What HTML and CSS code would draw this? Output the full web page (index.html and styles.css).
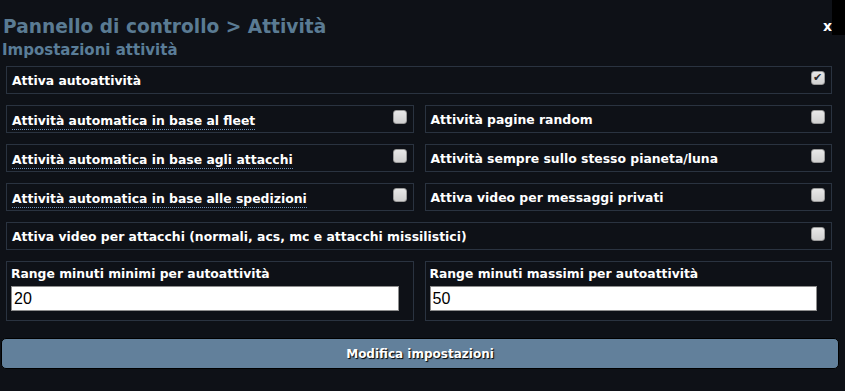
FILE: index.html
```html
<!DOCTYPE html>
<html lang="it">
<head>
    <meta charset="UTF-8">
    <title>Pannello di controllo - Attività</title>
    <link rel="stylesheet" href="styles.css">
</head>
<body>
    <div class="panel">
        <div class="panel-head">
            <h1>Pannello di controllo &gt; Attività</h1>
            <span class="close">x</span>
        </div>
        <h2>Impostazioni attività</h2>

        <form class="settings">
            <label class="opt full">
                <span>Attiva autoattività</span>
                <input type="checkbox" checked>
            </label>

            <label class="opt">
                <span class="hint">Attività automatica in base al fleet</span>
                <input type="checkbox">
            </label>
            <label class="opt">
                <span>Attività pagine random</span>
                <input type="checkbox">
            </label>

            <label class="opt">
                <span class="hint">Attività automatica in base agli attacchi</span>
                <input type="checkbox">
            </label>
            <label class="opt">
                <span>Attività sempre sullo stesso pianeta/luna</span>
                <input type="checkbox">
            </label>

            <label class="opt">
                <span class="hint">Attività automatica in base alle spedizioni</span>
                <input type="checkbox">
            </label>
            <label class="opt">
                <span>Attiva video per messaggi privati</span>
                <input type="checkbox">
            </label>

            <label class="opt full">
                <span>Attiva video per attacchi (normali, acs, mc e attacchi missilistici)</span>
                <input type="checkbox">
            </label>

            <div class="range">
                <span>Range minuti minimi per autoattività</span>
                <input type="text" value="20">
            </div>
            <div class="range">
                <span>Range minuti massimi per autoattività</span>
                <input type="text" value="50">
            </div>
        </form>

        <button type="button">Modifica impostazioni</button>
    </div>
    <div class="edge"></div>
</body>
</html>
```

FILE: styles.css
```css
body {
    margin: 0;
    background: #0e1117;
    font-family: Verdana, "DejaVu Sans", sans-serif;
    color: #fff;
}
.panel {
    width: 839px;
    padding-top: 14px;
}
.panel-head {
    display: flex;
    justify-content: space-between;
    align-items: baseline;
    padding: 0 7px 0 3px;
}
h1 {
    margin: 0;
    font-size: 18.6px;
    line-height: 26px;
    color: #5a7b93;
}
.close {
    font-size: 14px;
    font-weight: bold;
    position: relative;
    top: -2px;
}
h2 {
    margin: 0;
    padding-left: 2px;
    font-size: 15px;
    line-height: 20px;
    color: #5a7d98;
}
.settings {
    display: grid;
    grid-template-columns: 1fr 1fr;
    gap: 11px 11px;
    width: 826px;
    margin: 6px 0 0 6px;
}
.opt {
    display: flex;
    justify-content: space-between;
    align-items: center;
    height: 28px;
    box-sizing: border-box;
    padding: 0 6px 0 5px;
    border: 1px solid #2a3340;
    font-size: 12.4px;
    font-weight: bold;
}
.hint {
    border-bottom: 1px dotted #6f8fb3;
    line-height: 16px;
    margin-top: 4px;
}
.full {
    grid-column: 1 / 3;
}
.opt input {
    appearance: none;
    align-self: flex-start;
    width: 14px;
    height: 14px;
    margin: 4px 0 0 0;
    border: 1px solid #9a9a9a;
    border-radius: 3px;
    background: linear-gradient(#e8e8e8, #d0d0d0);
    position: relative;
}
.opt input:checked::after {
    content: "\2714";
    position: absolute;
    left: 1px;
    top: -1px;
    font-family: "DejaVu Sans", sans-serif;
    font-size: 11px;
    font-weight: bold;
    color: #2a2a2a;
}
.range {
    display: flex;
    flex-direction: column;
    gap: 5px;
    height: 60px;
    box-sizing: border-box;
    padding: 5px 14px 5px 4px;
    border: 1px solid #2a3340;
    font-size: 12.35px;
    font-weight: bold;
}
.range input {
    height: 25px;
    box-sizing: border-box;
    border: 1px solid #8e8e8e;
    padding: 0 2px;
    font-family: "Liberation Sans", Arial, sans-serif;
    font-size: 16px;
    color: #000;
}
button {
    display: block;
    width: 838px;
    height: 31px;
    margin: 17px 0 0 1px;
    background: #62809b;
    border: 1px solid #000;
    border-radius: 5px;
    color: #fff;
    font-family: Verdana, "DejaVu Sans", sans-serif;
    font-size: 12px;
    font-weight: bold;
    text-shadow: 1px 1px 1px #000;
}
.edge {
    position: absolute;
    top: 0;
    right: 0;
    width: 13px;
    height: 35px;
    background: #000;
}
```
